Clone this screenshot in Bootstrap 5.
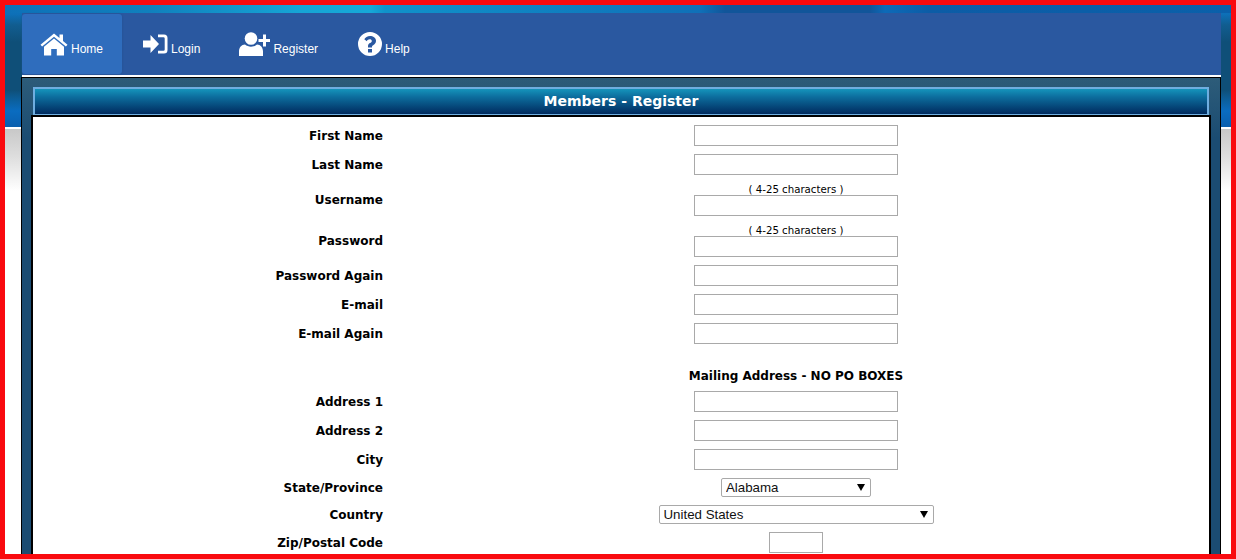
<!DOCTYPE html>
<html lang="en">
<head>
    <meta charset="UTF-8">
    <meta name="viewport" content="width=device-width, initial-scale=1.0">
    <title>Members - Register</title>
    <link href="https://cdn.jsdelivr.net/npm/bootstrap@5.3.0/dist/css/bootstrap.min.css" rel="stylesheet">
    <style>
        html, body {
            height: 559px;
            overflow: hidden;
        }
        body {
            font-family: "DejaVu Sans", sans-serif;
            background-color: #fff;
            background-image:
                linear-gradient(90deg, #0d70b8 0, #1080bd 150px, #16a5d5 300px, #16a8d8 370px, #1092ca 385px, #0f70b8 700px, #11559a 725px, #11559a 870px, #0d6ab8 885px, #0c5ca6 930px, #0a60aa 100%),
                linear-gradient(180deg, #0d70b8 0, #0d70b8 14px, #115d90 25px, #0f4f78 42px, #0f4f78 90px, #0c5f9c 100px, #0a6cc0 111px, #0a5fae 127px),
                linear-gradient(180deg, #fff 0, #fff 2px, #c8c8c8 2px, #dedede 30px, #fff 64px);
            background-size: 100% 13px, 100% 127px, 100% 70px;
            background-position: 0 0, 0 0, 0 127px;
            background-repeat: no-repeat;
        }
        .red-frame {
            position: fixed;
            inset: 0;
            border: 5px solid #f90a0f;
            pointer-events: none;
            z-index: 10;
        }
        .page-wrap {
            padding: 13px 15px 0 21px;
        }
        .top-menu {
            margin-left: 1px;
            height: 62px;
            background: #2a58a0;
        }
        .top-menu .nav-link {
            height: 60px;
            margin-top: 1px;
            padding: 0 19.5px;
            color: #fff;
            font: 12px "Liberation Sans", sans-serif;
            border-radius: 3px;
        }
        .top-menu .nav-link.active {
            background: #2f6dbd;
            color: #fff;
            padding: 0 19px 0 18px;
            margin-right: 1.5px;
            box-shadow: 0 0 2px #20508f;
        }
        .top-menu .nav-link.help-link {
            padding-left: 20.5px;
        }
        .menu-gap {
            gap: 3px;
        }
        .top-menu svg {
            fill: #fff;
            display: block;
        }
        .top-menu .nav-text {
            margin-top: 10px;
        }
        .white-rule {
            height: 2px;
            background: #fff;
            margin-left: 1px;
        }
        .panel-box {
            border: 1px solid #000;
            background: linear-gradient(180deg, #2d5c79 0, #1b4c72 60px);
            padding: 9px 9px 0 9px;
        }
        .panel-title {
            margin: 0 2px;
            height: 28px;
            line-height: 25px;
            text-align: center;
            color: #fff;
            font-size: 14px;
            font-weight: 700;
            background: linear-gradient(180deg, #1594bb 0, #0d6f9f 30%, #002a5e 100%);
            border: 1px solid #6faee0;
            border-width: 2px 2px 1px 2px;
        }
        .panel-body-box {
            border: 2px solid #000;
            border-bottom: 0;
            background: #fff;
            padding: 8px 0 20px;
        }
        .form-line {
            display: grid;
            grid-template-columns: 350px 1fr;
            margin-bottom: 8px;
            align-items: center;
            color: #000;
            font-size: 12px;
        }
        .line-label {
            text-align: right;
            font-weight: 700;
        }
        .line-field {
            text-align: center;
        }
        .hint-text {
            height: 12px;
            line-height: 14px;
            font-size: 10.2px;
        }
        .section-head {
            margin-top: 24px;
            margin-bottom: 7px;
            line-height: 16px;
            font-weight: 700;
        }
        .plain-input {
            display: block;
            margin: 0 auto;
            width: 204px;
            height: 21px;
            padding: 1px 4px;
            border: 1px solid #a9a9a9;
            background: #fff;
        }
        .zip-input {
            width: 54px;
        }
        .plain-select {
            display: block;
            margin: 0 auto;
            height: 19px;
            padding: 0 4px;
            appearance: none;
            border: 1px solid #a9a9a9;
            border-radius: 2px;
            color: #111;
            font: 13.3px/17px "Liberation Sans", sans-serif;
            background: #fff url("data:image/svg+xml,%3Csvg xmlns='http://www.w3.org/2000/svg' width='8' height='7'%3E%3Cpath d='M0 0h8L4 7z'/%3E%3C/svg%3E") no-repeat right 5px center;
        }
        .state-select { width: 150px; }
        .country-select { width: 275px; }
    </style>
</head>
<body>
    <div class="red-frame"></div>
    <div class="page-wrap">
        <nav class="top-menu">
            <ul class="nav">
                <li class="nav-item">
                    <a class="nav-link active d-flex align-items-center menu-gap" href="#">
                        <svg width="28" height="24" viewBox="0 0 28 24"><path d="M14 1.500 0.500 12.700l1.600 1.900L14 4.800l11.900 9.800 1.600-1.900L23 9V2.500h-3.500v3.600z"/><path d="M14 6.600 4 14.800V23.500h7.200v-6.500h5.600v6.500H24V14.800z"/></svg>
                        <span class="nav-text">Home</span>
                    </a>
                </li>
                <li class="nav-item">
                    <a class="nav-link d-flex align-items-center menu-gap" href="#">
                        <svg width="25" height="20" viewBox="0 0 25 20"><path d="M0 6.500h7.500V1l8.500 9-8.500 9v-5.500H0z"/><path d="M15 0.500h6a3.500 3.500 0 0 1 3.500 3.500v12a3.500 3.500 0 0 1-3.500 3.500h-6v-2.800h5.500a1.200 1.200 0 0 0 1.200-1.200V4.500a1.200 1.200 0 0 0-1.200-1.200H15z"/></svg>
                        <span class="nav-text">Login</span>
                    </a>
                </li>
                <li class="nav-item">
                    <a class="nav-link d-flex align-items-center menu-gap" href="#">
                        <svg width="31" height="24" viewBox="0 0 31 24"><circle cx="12" cy="6.500" r="6.300"/><path d="M0 24v-4.500C0 15.500 2.500 12.500 6 12.500c1.700 1.400 3.700 2.200 6 2.200s4.300-.8 6-2.200c3.500 0 6 3 6 7V24z"/><path d="M24 7V2.500h3V7h4v3h-4v4.500h-3V10h-4.500V7z"/></svg>
                        <span class="nav-text">Register</span>
                    </a>
                </li>
                <li class="nav-item">
                    <a class="nav-link help-link d-flex align-items-center menu-gap" href="#">
                        <svg width="24" height="24" viewBox="0 0 24 24"><path fill-rule="evenodd" d="M12 0a12 12 0 1 1 0 24a12 12 0 0 1 0-24zM10 17v3.500h4V17zM12 4C9.300 4 7.400 5.300 6.300 7.300l2.500 1.900C9.500 8 10.300 7.300 11.700 7.300c1.200 0 2.100.7 2.100 1.600 0 1-.7 1.500-1.800 2.100-1.300.7-2 1.700-2 3.200V15.500h4v-.8c0-.8.500-1.200 1.500-1.800 1.400-.8 2.500-2 2.500-4.100C18 5.900 15 4 12 4z"/></svg>
                        <span class="nav-text">Help</span>
                    </a>
                </li>
            </ul>
        </nav>
        <div class="white-rule"></div>
        <div class="panel-box">
            <div class="panel-title">Members - Register</div>
            <div class="panel-body-box">
                <div class="form-line"><div class="line-label">First Name</div><div class="line-field"><input class="plain-input" type="text"></div></div>
                <div class="form-line"><div class="line-label">Last Name</div><div class="line-field"><input class="plain-input" type="text"></div></div>
                <div class="form-line"><div class="line-label">Username</div><div class="line-field"><div class="hint-text">( 4-25 characters )</div><input class="plain-input" type="text"></div></div>
                <div class="form-line"><div class="line-label">Password</div><div class="line-field"><div class="hint-text">( 4-25 characters )</div><input class="plain-input" type="password"></div></div>
                <div class="form-line"><div class="line-label">Password Again</div><div class="line-field"><input class="plain-input" type="password"></div></div>
                <div class="form-line"><div class="line-label">E-mail</div><div class="line-field"><input class="plain-input" type="text"></div></div>
                <div class="form-line"><div class="line-label">E-mail Again</div><div class="line-field"><input class="plain-input" type="text"></div></div>
                <div class="form-line section-head"><div></div><div class="line-field">Mailing Address - NO PO BOXES</div></div>
                <div class="form-line"><div class="line-label">Address 1</div><div class="line-field"><input class="plain-input" type="text"></div></div>
                <div class="form-line"><div class="line-label">Address 2</div><div class="line-field"><input class="plain-input" type="text"></div></div>
                <div class="form-line"><div class="line-label">City</div><div class="line-field"><input class="plain-input" type="text"></div></div>
                <div class="form-line"><div class="line-label">State/Province</div><div class="line-field"><select class="plain-select state-select"><option>Alabama</option></select></div></div>
                <div class="form-line"><div class="line-label">Country</div><div class="line-field"><select class="plain-select country-select"><option>United States</option></select></div></div>
                <div class="form-line"><div class="line-label">Zip/Postal Code</div><div class="line-field"><input class="plain-input zip-input" type="text"></div></div>
            </div>
        </div>
    </div>
    <script src="https://cdn.jsdelivr.net/npm/bootstrap@5.3.0/dist/js/bootstrap.bundle.min.js"></script>
</body>
</html>
